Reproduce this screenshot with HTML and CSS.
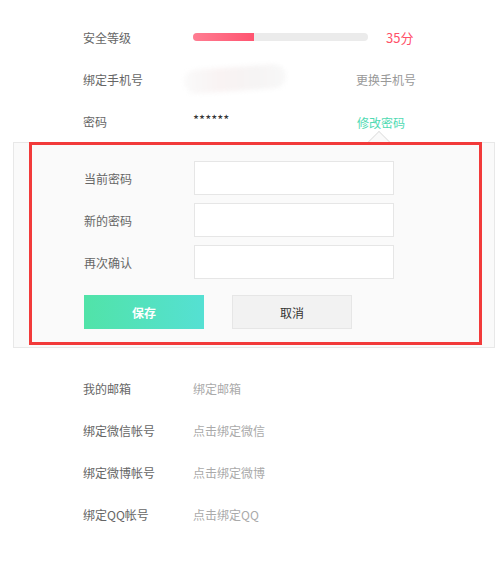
FILE: index.html
```html
<!DOCTYPE html>
<html lang="zh-CN">

<head>
    <meta charset="UTF-8">
    <meta name="viewport" content="width=device-width, initial-scale=1.0">
    <title>账号安全</title>
    <link rel="stylesheet" href="styles.css">
</head>

<body>
    <div class="account">
        <div class="row top-row">
            <span class="label">安全等级</span>
            <div class="value">
                <div class="level-bar"><div class="level-fill"></div></div>
            </div>
            <span class="score">35分</span>
        </div>
        <div class="row top-row">
            <span class="label">绑定手机号</span>
            <div class="value"><div class="blurred"></div></div>
            <a class="action">更换手机号</a>
        </div>
        <div class="row top-row">
            <span class="label">密码</span>
            <div class="value stars">******</div>
            <a class="action active">修改密码</a>
        </div>

        <div class="password-panel">
            <span class="caret"></span>
            <div class="form-row">
                <label for="oldPwd">当前密码</label>
                <input type="password" id="oldPwd">
            </div>
            <div class="form-row">
                <label for="newPwd">新的密码</label>
                <input type="password" id="newPwd">
            </div>
            <div class="form-row">
                <label for="rePwd">再次确认</label>
                <input type="password" id="rePwd">
            </div>
            <div class="buttons">
                <button class="btn btn-save">保存</button>
                <button class="btn btn-cancel">取消</button>
            </div>
            <div class="highlight"></div>
        </div>

        <div class="bind-list">
            <div class="row">
                <span class="label">我的邮箱</span>
                <a class="value link">绑定邮箱</a>
            </div>
            <div class="row">
                <span class="label">绑定微信帐号</span>
                <a class="value link">点击绑定微信</a>
            </div>
            <div class="row">
                <span class="label">绑定微博帐号</span>
                <a class="value link">点击绑定微博</a>
            </div>
            <div class="row">
                <span class="label">绑定QQ帐号</span>
                <a class="value link">点击绑定QQ</a>
            </div>
        </div>
    </div>
</body>

</html>
```

FILE: styles.css
```css
body {
    margin: 0;
    background-color: #fff;
    font-family: "Microsoft YaHei", "Noto Sans CJK SC", sans-serif;
    font-size: 12px;
    color: #666;
}

.account {
    width: 495px;
    padding-top: 16px;
}

.row {
    display: flex;
    align-items: center;
    height: 42px;
    padding-left: 83px;
}

.top-row {
    width: 416px;
    box-sizing: border-box;
}

.label {
    width: 110px;
    flex-shrink: 0;
    color: #666;
}

.value {
    width: 175px;
    flex-shrink: 1;
    color: #333;
}

.level-bar {
    height: 8px;
    background-color: #ebebeb;
    border-radius: 4px;
    overflow: hidden;
}

.level-fill {
    width: 35%;
    height: 100%;
    background: linear-gradient(to right, #ff7d92, #ff5470);
}

.score {
    margin-left: 18px;
    font-size: 13px;
    white-space: nowrap;
    color: #ff5068;
}

.blurred {
    width: 102px;
    height: 24px;
    margin-left: -9px;
    background: linear-gradient(to right, #fafafa, #f9f3f3 35%, #f6f4f4 70%, #f8f8f8);
    border-radius: 12px;
    filter: blur(2px);
    transform: rotate(-4deg);
}

.action {
    margin-left: auto;
    flex-shrink: 0;
    white-space: nowrap;
    color: #999;
    cursor: pointer;
}

.action.active {
    margin-right: 11px;
    margin-top: 2px;
    color: #4fdab2;
}

.stars {
    font-size: 13px;
    color: #333;
    margin-top: -4px;
}

.password-panel {
    position: relative;
    margin-left: 13px;
    padding: 18px 0 18px 70px;
    background-color: #fafafa;
    border: 1px solid #e8e8e8;
}

.caret {
    position: absolute;
    top: -9px;
    left: 357px;
    width: 15px;
    height: 15px;
    background-color: #fafafa;
    border-top: 1px solid #e4e4e4;
    border-left: 1px solid #e4e4e4;
    transform: rotate(45deg);
}

.form-row {
    display: flex;
    align-items: center;
    margin-bottom: 8px;
}

.form-row label {
    width: 110px;
    color: #666;
}

.form-row input {
    width: 200px;
    height: 34px;
    box-sizing: border-box;
    border: 1px solid #e6e6e6;
    background-color: #fff;
    outline: none;
}

.buttons {
    display: flex;
    gap: 28px;
    margin-top: 16px;
}

.btn {
    width: 120px;
    height: 34px;
    font-family: inherit;
    font-size: 12px;
    cursor: pointer;
}

.btn-save {
    border: none;
    background: linear-gradient(to right, #51e3a8, #55e0d3);
    color: #fff;
    font-weight: bold;
}

.btn-cancel {
    border: 1px solid #e6e6e6;
    background-color: #f2f2f2;
    color: #333;
}

.highlight {
    position: absolute;
    top: -1px;
    left: 15px;
    width: 447px;
    height: 197px;
    border: 3px solid #f23a3a;
    pointer-events: none;
}

.bind-list {
    margin-top: 19px;
}

.link {
    color: #aaa;
    cursor: pointer;
}
```
